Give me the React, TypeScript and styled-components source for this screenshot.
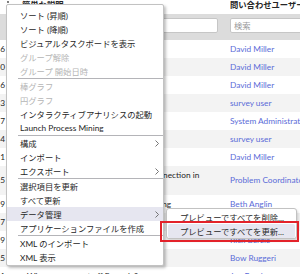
import React from 'react';
import styled, { createGlobalStyle } from 'styled-components';

type RowData = {
    num: string,
    desc: string,
    caller: string
}

const rows: RowData[] = [
    { num: 'INC0000046', desc: "Can't access SFA software", caller: 'David Miller' },
    { num: 'INC0000050', desc: "Can't access Exchange server", caller: 'David Miller' },
    { num: 'INC0000016', desc: 'Rain is leaking on main DNS', caller: 'David Miller' },
    { num: 'INC0000053', desc: 'The SAP HR application is not', caller: 'survey user' },
    { num: 'INC0000057', desc: 'Performance problems with wifi', caller: 'System Administrator' },
    { num: 'INC0000054', desc: 'SAP Materials Management', caller: 'survey user' },
    { num: 'INC0000051', desc: "Manager can't access SAP", caller: 'David Miller' },
    { num: 'INC0000055', desc: 'Unable to establish VPN network connection in remote office', caller: 'Problem Coordinator' },
    { num: 'INC0000019', desc: "A printer on the third floor isn't working", caller: 'Beth Anglin' },
    { num: 'INC0000017', desc: 'How do I create a sub-folder', caller: 'Don Goodliffe' },
    { num: 'INC0000039', desc: 'Trouble getting to Oregon mail', caller: 'Rick Berzle' },
    { num: 'INC0000025', desc: 'I need more memory', caller: 'Bow Ruggeri' },
    { num: 'INC0000031', desc: 'When can we get off Remedy?', caller: 'Joe Employee' },
];

type MenuEntry = { label: string, disabled?: boolean, sub?: boolean, active?: boolean } | 'sep';

const menu: MenuEntry[] = [
    { label: 'ソート (昇順)' },
    { label: 'ソート (降順)' },
    { label: 'ビジュアルタスクボードを表示' },
    { label: 'グループ解除', disabled: true },
    { label: 'グループ 開始日時', disabled: true },
    'sep',
    { label: '棒グラフ', disabled: true },
    { label: '円グラフ', disabled: true },
    { label: 'インタラクティブアナリシスの起動' },
    { label: 'Launch Process Mining' },
    'sep',
    { label: '構成', sub: true },
    { label: 'インポート' },
    { label: 'エクスポート', sub: true },
    'sep',
    { label: '選択項目を更新' },
    { label: 'すべて更新' },
    { label: 'データ管理', sub: true, active: true },
    { label: 'アプリケーションファイルを作成' },
    'sep',
    { label: 'XML のインポート' },
    { label: 'XML 表示' },
];

const GlobalStyle = createGlobalStyle`
    html, body {
        margin: 0;
        padding: 0;
        background: #fff;
    }
    body {
        font-family: Lato, "Noto Sans CJK JP", sans-serif;
        font-size: 8.3px;
        color: #262626;
        overflow: hidden;
    }
`;

const Page = styled.div`
    position: relative;
    width: 300px;
    height: 274px;
    overflow: hidden;
    background: #fff;
`;

const Row = styled.div<{ $bg?: string }>`
    display: grid;
    grid-template-columns: 6px 218px 76px;
    align-items: center;
    background: ${p => p.$bg || '#fff'};
`;

const HeadRow = styled(Row)`
    height: 14px;
    align-items: start;
    line-height: 11px;
    font-weight: bold;
`;

const SearchRow = styled(Row)`
    height: 26px;
    padding: 4px 0 7px;
    box-sizing: border-box;
    align-items: stretch;
    background: #dcdcdc;
`;

const HeadDesc = styled.div`
    display: flex;
    align-items: center;
    gap: 13px;
    padding-left: 1px;
    white-space: nowrap;
    overflow: hidden;
`;

const HeadCaller = styled.div`
    padding-left: 6px;
    white-space: nowrap;
    overflow: hidden;
`;

const SearchCell = styled.div<{ $side: 'left' | 'right' }>`
    padding: ${p => (p.$side === 'left' ? '0 6px 0 20px' : '0 0 0 6px')};
    overflow: hidden;
`;

const SearchInput = styled.input`
    box-sizing: border-box;
    width: 100%;
    min-width: 90px;
    height: 15px;
    margin: 0;
    padding: 0 3px;
    border: 1px solid #c6c6c6;
    border-radius: 2px;
    background: #fff;
    font: inherit;
    font-weight: normal;
    outline: none;
    &::placeholder {
        color: #9a9a9a;
    }
`;

const NumCell = styled.div`
    display: flex;
    justify-content: flex-end;
    overflow: hidden;
    padding-right: 1px;
    white-space: nowrap;
    line-height: 11px;
    & > span {
        flex-shrink: 0;
    }
`;

const DescCell = styled.div`
    padding: 3.5px 6px 3.5px 21px;
    line-height: 11px;
    align-self: start;
`;

const CallerCell = styled.div`
    padding-left: 6px;
    white-space: nowrap;
    overflow: hidden;
    color: #5a6bd8;
    line-height: 11px;
`;

const Menu = styled.div`
    position: absolute;
    left: 6px;
    top: 4px;
    width: 158px;
    box-sizing: border-box;
    padding: 3px 0 1px;
    background: #fff;
    border: 1px solid #c2c2c2;
    border-radius: 2px;
    box-shadow: 2px 2px 3px rgba(0, 0, 0, 0.25);
`;

const Item = styled.div<{ $disabled?: boolean, $active?: boolean }>`
    height: 14px;
    display: flex;
    align-items: center;
    justify-content: space-between;
    padding: 0 4px 0 13px;
    white-space: nowrap;
    color: ${p => (p.$disabled ? '#b5b5b5' : '#262626')};
    background: ${p => (p.$active ? '#e6e6f0' : 'transparent')};
`;

const Sep = styled.div`
    height: 1px;
    margin-left: 11px;
    background: #b4b4b8;
`;

const SubMenu = styled.div`
    position: absolute;
    left: 166px;
    top: 208px;
    width: 131px;
    box-sizing: border-box;
    padding: 1px 1px 0;
    background: #fff;
    border: 1px solid #c2c2c2;
    border-radius: 3px;
    box-shadow: 1px 2px 3px rgba(0, 0, 0, 0.18);
`;

const SubItem = styled.div<{ $active?: boolean }>`
    height: 14px;
    display: flex;
    align-items: center;
    padding-left: 12px;
    white-space: nowrap;
    border-radius: 2px;
    background: ${p => (p.$active ? '#e6e6f0' : 'transparent')};
`;

const Highlight = styled.div`
    position: absolute;
    left: 160px;
    top: 221px;
    width: 139px;
    height: 21px;
    box-sizing: border-box;
    border: 2px solid #e3222a;
`;

const Chevron = () => (
    <svg width="4" height="7" viewBox="0 0 4 7">
        <polyline points="0.5,0.5 3.5,3.5 0.5,6.5" fill="none" stroke="#666" strokeWidth="0.9" />
    </svg>
);

const ColMenuIcon = () => (
    <svg width="2" height="10" viewBox="0 0 2 10">
        <circle cx="1" cy="1" r="0.9" fill="#444" />
        <circle cx="1" cy="4.5" r="0.9" fill="#444" />
        <circle cx="1" cy="8" r="0.9" fill="#444" />
    </svg>
);

const App = () => {
    return (
        <Page>
            <GlobalStyle />
            <HeadRow>
                <div />
                <HeadDesc>
                    <ColMenuIcon />
                    <span>簡単な説明</span>
                </HeadDesc>
                <HeadCaller>問い合わせユーザー</HeadCaller>
            </HeadRow>
            <SearchRow>
                <div />
                <SearchCell $side="left">
                    <SearchInput readOnly />
                </SearchCell>
                <SearchCell $side="right">
                    <SearchInput readOnly placeholder="検索" />
                </SearchCell>
            </SearchRow>
            {rows.map((r, i) => (
                <Row key={r.num} $bg={i % 2 === 1 ? '#f3f3f3' : '#fff'}>
                    <NumCell><span>{r.num}</span></NumCell>
                    <DescCell>{r.desc}</DescCell>
                    <CallerCell>{r.caller}</CallerCell>
                </Row>
            ))}

            <Menu>
                {menu.map((m, i) =>
                    m === 'sep' ? (
                        <Sep key={i} />
                    ) : (
                        <Item key={i} $disabled={m.disabled} $active={m.active}>
                            <span>{m.label}</span>
                            {m.sub && <Chevron />}
                        </Item>
                    )
                )}
            </Menu>

            <SubMenu>
                <SubItem>プレビューですべてを削除...</SubItem>
                <SubItem $active>プレビューですべてを更新...</SubItem>
            </SubMenu>
            <Highlight />
        </Page>
    );
}

export default App;
